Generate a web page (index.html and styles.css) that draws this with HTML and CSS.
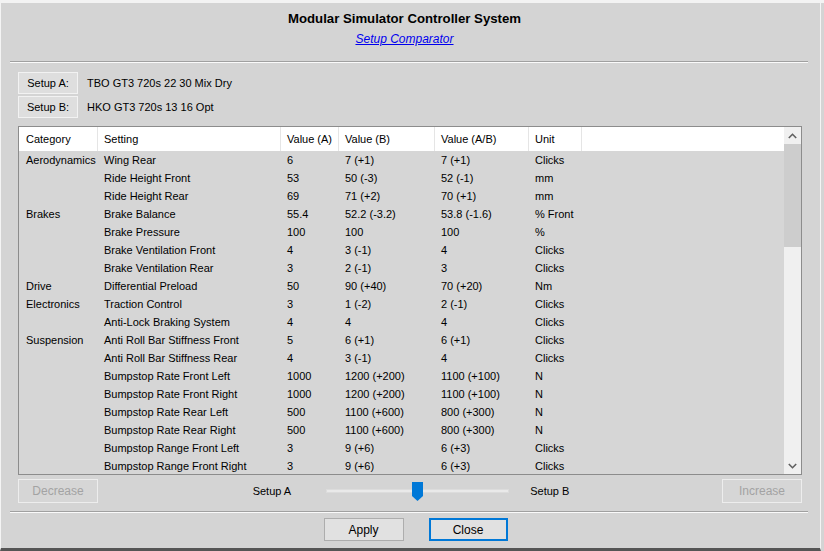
FILE: index.html
```html
<!DOCTYPE html>
<html>
<head>
<meta charset="utf-8">
<link rel="stylesheet" href="styles.css">
</head>
<body>
<div class="topstrip"></div>
<div class="window">
  <div class="header">
    <div class="title">Modular Simulator Controller System</div>
    <a class="subtitle" href="#">Setup Comparator</a>
  </div>
  <div class="etch etch-top"></div>
  <div class="setups">
    <div class="setup-row"><button class="btn setup-btn">Setup A:</button><span class="setup-name">TBO GT3 720s 22 30 Mix Dry</span></div>
    <div class="setup-row"><button class="btn setup-btn">Setup B:</button><span class="setup-name">HKO GT3 720s 13 16 Opt</span></div>
  </div>
  <div class="table">
    <div class="grid">
      <div class="row head">
        <div class="c c1">Category</div><div class="c">Setting</div><div class="c">Value (A)</div><div class="c">Value (B)</div><div class="c">Value (A/B)</div><div class="c">Unit</div><div class="c fill"></div>
      </div>
      <div class="row"><div class="c c1">Aerodynamics</div><div class="c">Wing Rear</div><div class="c">6</div><div class="c">7 (+1)</div><div class="c">7 (+1)</div><div class="c">Clicks</div><div class="c fill"></div></div>
      <div class="row"><div class="c c1"></div><div class="c">Ride Height Front</div><div class="c">53</div><div class="c">50 (-3)</div><div class="c">52 (-1)</div><div class="c">mm</div><div class="c fill"></div></div>
      <div class="row"><div class="c c1"></div><div class="c">Ride Height Rear</div><div class="c">69</div><div class="c">71 (+2)</div><div class="c">70 (+1)</div><div class="c">mm</div><div class="c fill"></div></div>
      <div class="row"><div class="c c1">Brakes</div><div class="c">Brake Balance</div><div class="c">55.4</div><div class="c">52.2 (-3.2)</div><div class="c">53.8 (-1.6)</div><div class="c">% Front</div><div class="c fill"></div></div>
      <div class="row"><div class="c c1"></div><div class="c">Brake Pressure</div><div class="c">100</div><div class="c">100</div><div class="c">100</div><div class="c">%</div><div class="c fill"></div></div>
      <div class="row"><div class="c c1"></div><div class="c">Brake Ventilation Front</div><div class="c">4</div><div class="c">3 (-1)</div><div class="c">4</div><div class="c">Clicks</div><div class="c fill"></div></div>
      <div class="row"><div class="c c1"></div><div class="c">Brake Ventilation Rear</div><div class="c">3</div><div class="c">2 (-1)</div><div class="c">3</div><div class="c">Clicks</div><div class="c fill"></div></div>
      <div class="row"><div class="c c1">Drive</div><div class="c">Differential Preload</div><div class="c">50</div><div class="c">90 (+40)</div><div class="c">70 (+20)</div><div class="c">Nm</div><div class="c fill"></div></div>
      <div class="row"><div class="c c1">Electronics</div><div class="c">Traction Control</div><div class="c">3</div><div class="c">1 (-2)</div><div class="c">2 (-1)</div><div class="c">Clicks</div><div class="c fill"></div></div>
      <div class="row"><div class="c c1"></div><div class="c">Anti-Lock Braking System</div><div class="c">4</div><div class="c">4</div><div class="c">4</div><div class="c">Clicks</div><div class="c fill"></div></div>
      <div class="row"><div class="c c1">Suspension</div><div class="c">Anti Roll Bar Stiffness Front</div><div class="c">5</div><div class="c">6 (+1)</div><div class="c">6 (+1)</div><div class="c">Clicks</div><div class="c fill"></div></div>
      <div class="row"><div class="c c1"></div><div class="c">Anti Roll Bar Stiffness Rear</div><div class="c">4</div><div class="c">3 (-1)</div><div class="c">4</div><div class="c">Clicks</div><div class="c fill"></div></div>
      <div class="row"><div class="c c1"></div><div class="c">Bumpstop Rate Front Left</div><div class="c">1000</div><div class="c">1200 (+200)</div><div class="c">1100 (+100)</div><div class="c">N</div><div class="c fill"></div></div>
      <div class="row"><div class="c c1"></div><div class="c">Bumpstop Rate Front Right</div><div class="c">1000</div><div class="c">1200 (+200)</div><div class="c">1100 (+100)</div><div class="c">N</div><div class="c fill"></div></div>
      <div class="row"><div class="c c1"></div><div class="c">Bumpstop Rate Rear Left</div><div class="c">500</div><div class="c">1100 (+600)</div><div class="c">800 (+300)</div><div class="c">N</div><div class="c fill"></div></div>
      <div class="row"><div class="c c1"></div><div class="c">Bumpstop Rate Rear Right</div><div class="c">500</div><div class="c">1100 (+600)</div><div class="c">800 (+300)</div><div class="c">N</div><div class="c fill"></div></div>
      <div class="row"><div class="c c1"></div><div class="c">Bumpstop Range Front Left</div><div class="c">3</div><div class="c">9 (+6)</div><div class="c">6 (+3)</div><div class="c">Clicks</div><div class="c fill"></div></div>
      <div class="row"><div class="c c1"></div><div class="c">Bumpstop Range Front Right</div><div class="c">3</div><div class="c">9 (+6)</div><div class="c">6 (+3)</div><div class="c">Clicks</div><div class="c fill"></div></div>
    </div>
    <div class="scrollbar">
      <div class="sb-arrow"><svg width="9" height="6" viewBox="0 0 9 6"><polyline points="0.8,5 4.5,1.3 8.2,5" fill="none" stroke="#606060" stroke-width="1.6"/></svg></div>
      <div class="sb-thumb"></div>
      <div class="sb-track"></div>
      <div class="sb-arrow"><svg width="9" height="6" viewBox="0 0 9 6"><polyline points="0.8,1 4.5,4.7 8.2,1" fill="none" stroke="#606060" stroke-width="1.6"/></svg></div>
    </div>
  </div>
  <div class="controls">
    <button class="btn wide disabled">Decrease</button>
    <div class="slider-group">
      <span class="slabel">Setup A</span>
      <div class="slider">
        <div class="track"></div>
        <svg class="thumb" width="11" height="19" viewBox="0 0 11 19"><path d="M0 0 H11 V14 L5.5 19 L0 14 Z" fill="#0078d7"/></svg>
      </div>
      <span class="slabel">Setup B</span>
    </div>
    <button class="btn wide disabled">Increase</button>
  </div>
  <div class="etch etch-bottom"></div>
  <div class="actions">
    <button class="btn wide action">Apply</button>
    <button class="btn wide action default">Close</button>
  </div>
</div>
</body>
</html>
```
FILE: styles.css
```css
html, body {
  margin: 0;
  padding: 0;
}
body {
  background: #d4d4d4;
  font-family: "Liberation Sans", Arial, sans-serif;
  font-size: 11px;
  color: #000;
  width: 824px;
  height: 551px;
  overflow: hidden;
}
.topstrip {
  height: 3px;
  background: #f3f3f3;
}
.window {
  box-sizing: border-box;
  width: 821px;
  height: 548px;
  background: #d4d4d4;
  border-left: 1px solid #f4f4f4;
  border-right: 1px solid #f4f4f4;
  border-bottom: 3px solid #555;
  display: flex;
  flex-direction: column;
}
.header {
  display: flex;
  flex-direction: column;
  align-items: center;
  padding-top: 8px;
  padding-right: 12px;
}
.title {
  font-weight: bold;
  font-size: 13.2px;
  line-height: 16px;
  color: #000;
}
.subtitle {
  margin-top: 4px;
  font-size: 12px;
  line-height: 16px;
  font-style: italic;
  color: #0000ee;
  text-decoration: underline;
}
.etch {
  height: 1px;
  background: #a0a0a0;
  border-bottom: 1px solid #fafafa;
  margin-left: 9px;
  margin-right: 12px;
}
.etch-top {
  margin-top: 14px;
}
.setups {
  margin-top: 9px;
  margin-left: 17px;
  display: flex;
  flex-direction: column;
  gap: 2px;
}
.setup-row {
  display: flex;
  align-items: center;
}
.btn {
  box-sizing: border-box;
  font-family: "Liberation Sans", Arial, sans-serif;
  font-size: 11px;
  color: #000;
  background: #e1e1e1;
  border: 1px solid #adadad;
  padding: 0;
  margin: 0;
}
.setup-btn {
  width: 60px;
  height: 22px;
  background: #dedede;
  border: 1px solid #f2f2f2;
}
.setup-name {
  margin-left: 9px;
}
.table {
  box-sizing: border-box;
  margin-top: 8px;
  margin-left: 17px;
  width: 784px;
  height: 349px;
  border: 1px solid #8c8c8c;
  display: flex;
  overflow: hidden;
}
.grid {
  flex: 1;
  overflow: hidden;
  background: #d6d6d6;
}
.row {
  display: grid;
  grid-template-columns: 79px 183px 58px 96px 94px 53px 1fr;
  height: 18px;
  line-height: 18px;
}
.row.head {
  height: 24px;
  line-height: 24px;
  background: #fff;
}
.c {
  padding-left: 6px;
  white-space: nowrap;
  overflow: hidden;
}
.c.c1 {
  padding-left: 7px;
}
.head .c {
  border-right: 1px solid #e5e5e5;
}
.head .c.fill {
  border-right: none;
}
.scrollbar {
  width: 17px;
  display: flex;
  flex-direction: column;
  background: #f0f0f0;
}
.sb-arrow {
  height: 17px;
  display: flex;
  align-items: center;
  justify-content: center;
  background: #f0f0f0;
}
.sb-thumb {
  height: 103px;
  background: #cdcdcd;
}
.sb-track {
  flex: 1;
}
.controls {
  margin-top: 4px;
  margin-left: 17px;
  width: 784px;
  height: 24px;
  display: flex;
  justify-content: space-between;
  align-items: center;
}
.wide {
  width: 80px;
  height: 24px;
}
.disabled {
  color: #a3a3a3;
  background: #d6d6d6;
  border: 1px solid #ededed;
  font-size: 12px;
}
.slider-group {
  display: flex;
  align-items: center;
  padding-left: 2px;
}
.slabel {
  line-height: 14px;
}
.slider {
  position: relative;
  width: 183px;
  height: 19px;
  margin-left: 35px;
  margin-right: 21px;
}
.track {
  position: absolute;
  left: 0;
  right: 0;
  top: 7px;
  height: 2px;
  background: #e9e9e9;
  border: 1px solid #dcdcdc;
}
.thumb {
  position: absolute;
  left: 86px;
  top: 0;
  display: block;
}
.etch-bottom {
  margin-top: 8px;
}
.actions {
  margin-top: 5px;
  display: flex;
  justify-content: center;
  gap: 25px;
  padding-left: 10px;
}
.action {
  height: 23px;
  font-size: 12px;
}
.default {
  border: 2px solid #0078d7;
  width: 79px;
}
```
